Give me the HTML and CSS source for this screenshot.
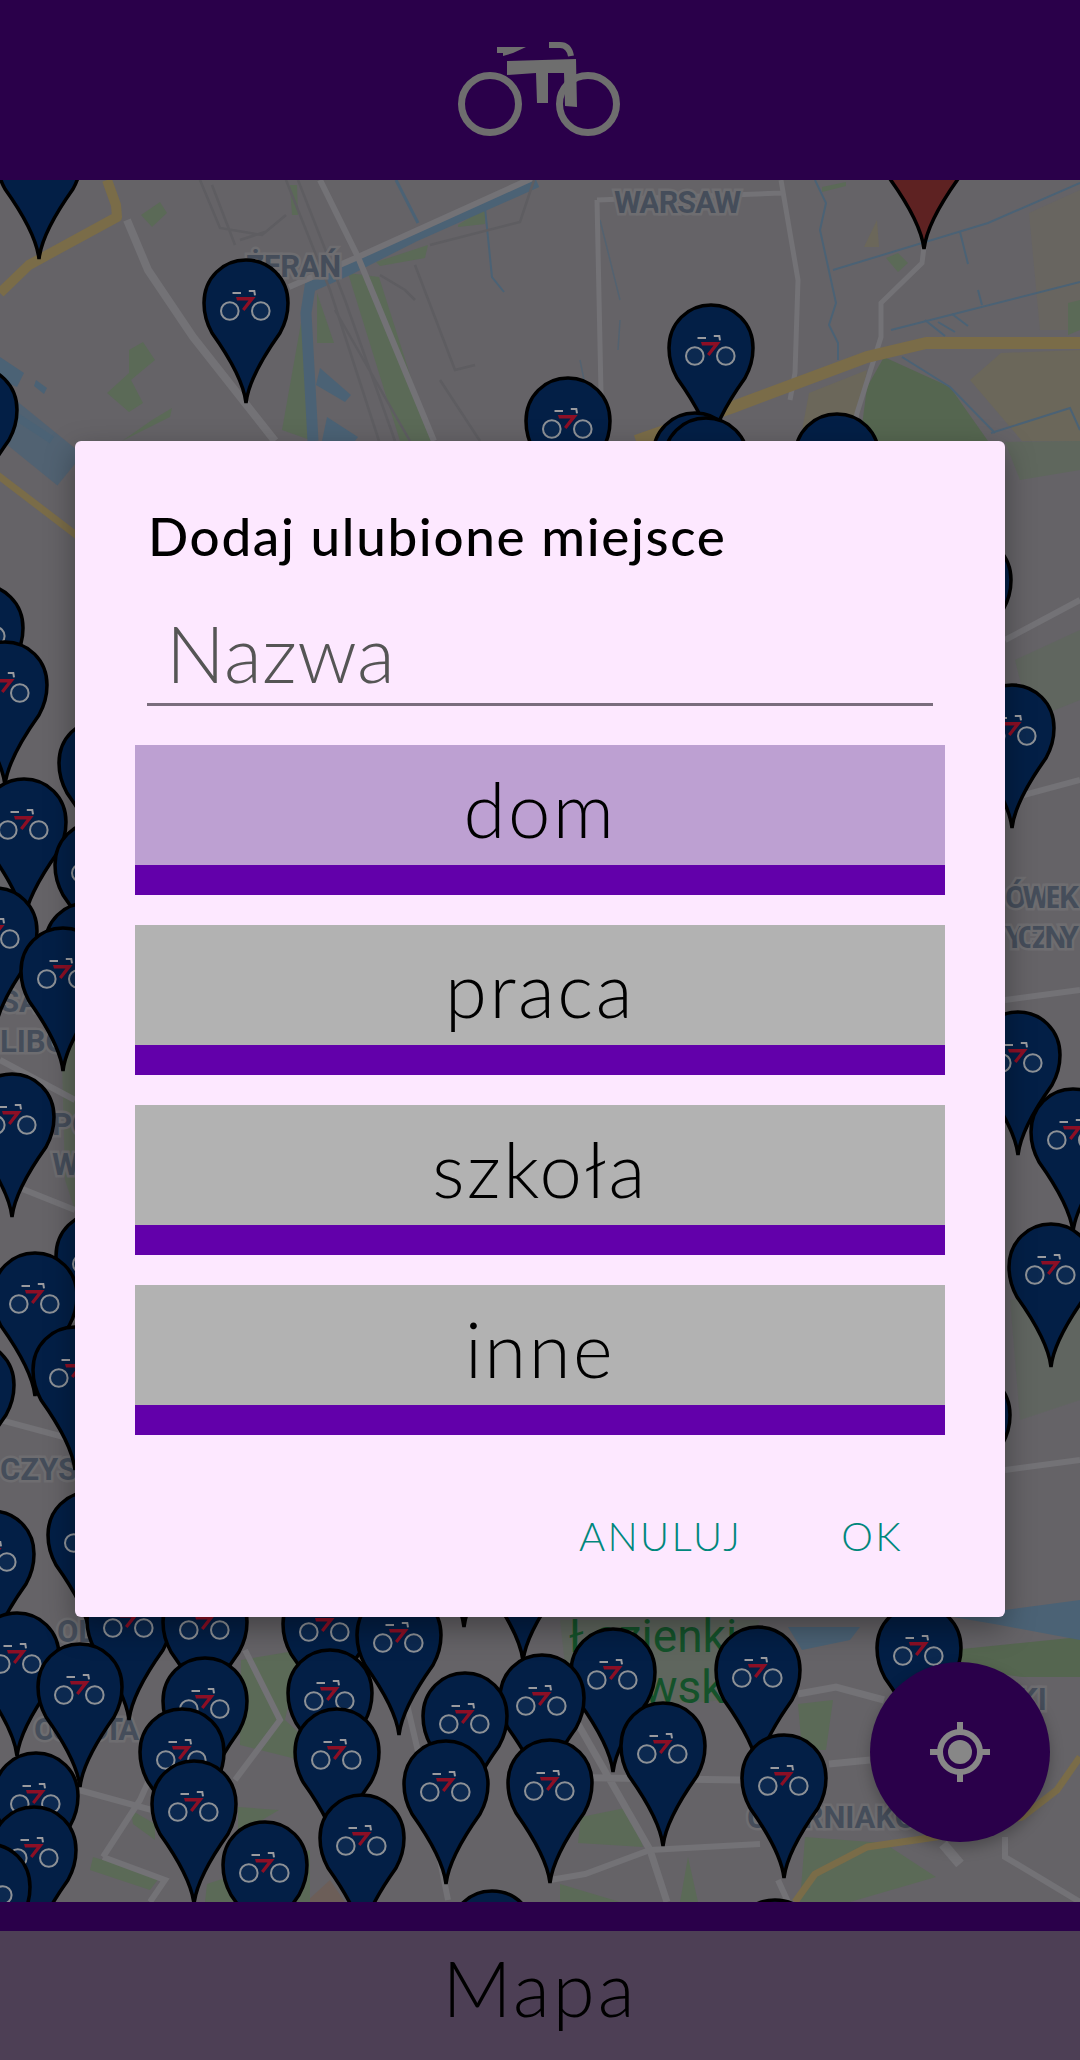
FILE: index.html
```html
<!DOCTYPE html>
<html lang="pl">
<head>
  <meta charset="UTF-8">
  <title>Mapa</title>
  <link rel="stylesheet" href="styles.css">
</head>
<body>
  <div class="app">
    <header class="topbar">
      <svg class="logo" viewBox="420 20 240 130" width="240" height="130">
        <circle cx="490" cy="104" r="28.5" fill="none" stroke="#6e6e6e" stroke-width="7"/>
        <circle cx="588" cy="104" r="28.5" fill="none" stroke="#6e6e6e" stroke-width="7"/>
        <path d="M507 61 L576 59 L577 107 L565 106 L564 73 L548 73 L548 103 L537 103 L536 73 L507 75Z" fill="#6e6e6e"/>
        <path d="M497 47 L526 47 L513 53 L503 56 L503 53 L497 53Z" fill="#6e6e6e"/>
        <path d="M549 45 L560 45 Q569 45 571 56" fill="none" stroke="#6e6e6e" stroke-width="6"/>
      </svg>
    </header>

    <main class="map">
      <svg class="map-canvas" viewBox="0 180 1080 1722" width="1080" height="1722">
        <defs>
          <g id="bike">
            <circle cx="-16.2" cy="-92" r="8.8" fill="#0c2950" stroke="#8d9196" stroke-width="2"/>
            <circle cx="14.8" cy="-92" r="8.8" fill="#0c2950" stroke="#8d9196" stroke-width="2"/>
            <path d="M-13.5 -110 H-5 M2.8 -112 H8.3 L9 -107.7" fill="none" stroke="#9a9a9e" stroke-width="2"/>
            <path d="M-10 -106 L9.6 -106 L-1.5 -92 L-4 -94 L2.5 -102.5 L-9 -102.5Z" fill="#8c0f25"/>
          </g>
          <path id="drop" d="M0 0 C-2 -18 -14 -42 -34 -70 C-39 -79 -42 -90 -42 -100 C-42 -125 -23 -143 0 -143 C23 -143 42 -125 42 -100 C42 -90 39 -79 34 -70 C14 -42 2 -18 0 0Z" stroke="#000" stroke-width="3.5"/>
          <g id="pin">
            <use href="#drop" fill="#031f46"/>
            <use href="#bike"/>
          </g>
        </defs>

        <!-- ground -->
        <rect x="0" y="180" width="1080" height="1722" fill="#656367"/>

        <!-- built-up and parks -->
        <g fill="#6b675a">
          <path d="M970 380 L1001 353 L1080 350 L1080 441 L1022 441Z"/>
          <path d="M809 393 L867 370 L860 413 L815 441 L800 441Z"/>
          <path d="M1029 213 L1080 190 L1080 330 L1040 330Z" opacity=".5"/>
          <path d="M864 247 L877 220 L879 247Z"/>
          <path d="M306 1902 L330 1880 L345 1902Z" fill="#6c5e58"/>
        </g>
        <g fill="#5b6a57">
          <path d="M141 215 L160 202 L167 213 L152 227Z"/>
          <path d="M129 350 L143 342 L155 360 L131 380 L143 403 L129 412 L107 393 L129 373Z"/>
          <path d="M172 408 L170 417 L122 441 L152 420Z"/>
          <path d="M348 273 L379 277 L431 441 L400 441Z"/>
          <path d="M376 262 L428 245 L425 258 L380 266Z"/>
          <path d="M458 225 L485 208 L485 224 L458 227Z"/>
          <path d="M301 323 L282 430 L313 441 L306 323Z"/>
          <path d="M317 293 L334 343 L317 343Z"/>
          <path d="M290 185 L297 185 L298 215 L292 215Z"/>
          <path d="M884 357 L950 387 L988 441 L860 441 L867 387Z" fill="#556650"/>
          <path d="M898 253 L908 263 L898 272 L886 258Z"/>
          <path d="M822 187 L846 182 L846 186 L822 192Z"/>
          <path d="M1068 303 L1080 300 L1080 330 L1068 335Z"/>
          <path d="M1005 442 L1080 441 L1080 470 L1020 480Z" opacity=".6"/>
          <path d="M1015 660 L1080 630 L1080 700 L1030 720Z" opacity=".5"/>
          <path d="M60 980 L75 975 L75 1210 L65 1180Z" opacity=".7"/>
          <path d="M1010 1300 L1080 1290 L1080 1400 L1020 1420Z" opacity=".4"/>
          <path d="M241 1660 L300 1650 L285 1720 L340 1770 L240 1745Z"/>
          <path d="M93 1857 L160 1877 L150 1890 L90 1870Z"/>
          <path d="M131 1810 L155 1824 L155 1840 L133 1824Z"/>
          <path d="M238 1807 L279 1810 L238 1834Z"/>
          <path d="M207 1884 L310 1850 L310 1902 L205 1902Z"/>
          <path d="M560 1620 L760 1620 L730 1700 L570 1710Z" opacity=".55"/>
          <path d="M798 1704 L833 1700 L826 1750 L802 1750Z"/>
          <path d="M805 1837 L884 1843 L936 1877 L850 1902 L800 1902Z"/>
          <path d="M884 1657 L1080 1637 L1080 1677 L1022 1677Z" fill="#556650"/>
          <path d="M581 1817 L630 1807 L643 1847 L578 1843Z"/>
          <path d="M560 1884 L620 1902 L560 1902Z"/>
          <path d="M688 1857 L698 1902 L680 1902Z"/>
        </g>

        <!-- water -->
        <g fill="#4b6275">
          <path d="M320 368 L351 395 L345 402 L316 385Z"/>
          <path d="M327 417 L358 437 L355 441 L322 441Z"/>
          <path d="M0 357 L24 373 L17 387 L0 380Z"/>
          <path d="M36 380 L47 388 L44 394 L34 386Z"/>
          <path d="M788 1627 L860 1627 L850 1640 L802 1650Z"/>
          <path d="M953 1617 L1080 1600 L1080 1640 L1000 1625Z"/>
        </g>
        <g fill="none" stroke="#4b6275">
          <path d="M537 182 L413 237 L348 270 L310 287 L306 313 L313 441" stroke-width="11"/>
          <path d="M-10 405 L70 470" stroke-width="40" opacity=".75"/>
          <path d="M17 417 L52 440" stroke-width="8"/>
          <path d="M396 180 L418 223" stroke-width="3"/>
          <path d="M485 208 L492 277 L504 292" stroke-width="2"/>
          <path d="M815 180 L826 203 L820 230 L836 303 L829 325 L838 343 L838 360" stroke-width="2"/>
          <path d="M833 270 L988 223 L1080 183" stroke-width="2"/>
          <path d="M891 330 L1080 282" stroke-width="2"/>
          <path d="M902 357 L950 387 L995 433" stroke-width="2"/>
          <path d="M991 433 L1070 408 L1080 430" stroke-width="2"/>
          <path d="M960 232 L968 264 M978 290 L982 305 M925 320 L945 336 M938 322 L955 332 M952 314 L968 326" stroke-width="2"/>
          <path d="M600 220 L620 300 M620 320 L618 350 M580 360 L585 385" stroke-width="1.5" opacity=".7"/>
        </g>

        <!-- roads -->
        <g fill="none" stroke="#737276" stroke-width="6">
          <path d="M127 220 L148 270 L193 337 L275 441" stroke-width="8"/>
          <path d="M537 176 L358 257 L289 287" stroke-width="6"/>
          <path d="M320 180 L358 257 L434 441" stroke-width="6"/>
          <path d="M597 200 L602 441 M597 200 L781 193 M781 180 L798 280 L795 373 L790 400" stroke-width="5"/>
          <path d="M924 247 L922 263 L881 303 L881 337 L857 413 L852 441" stroke-width="5"/>
          <path d="M75 1100 L0 1060 M0 1180 L75 1210 M0 1300 L75 1320 M0 1420 L75 1440"/>
          <path d="M1005 640 L1080 600 M1005 800 L1080 780 M1005 1000 L1080 990 M1005 1470 L1080 1460"/>
          <path d="M79 1790 L170 1815 M103 1857 L140 1800 L165 1745 M0 1880 L79 1790 M103 1857 L165 1880 L150 1902"/>
          <path d="M245 1650 L280 1720 L235 1780 M392 1640 L420 1760 L448 1900" stroke-width="6"/>
          <path d="M798 1694 L836 1687 L884 1700 M574 1717 L650 1850 L667 1902 M540 1777 L740 1780 M829 1764 L870 1760" stroke-width="7"/>
          <path d="M550 1880 L585 1874 L650 1850 L760 1844 M1005 1837 L1005 1857 L1080 1902 M778 1880 L788 1902"/>
          <path d="M943 1844 L960 1864" stroke-width="10"/>
        </g>
        <g fill="none" stroke="#5e5d61" stroke-width="2.5">
          <path d="M286 180 L330 290 L379 441 M298 180 L345 300 L395 441 M335 310 L410 441"/>
          <path d="M200 180 L220 228 L262 235 L286 215 M212 185 L235 245 M240 240 L265 232"/>
          <path d="M430 245 L520 222 L534 180 M380 275 L405 290 L415 300 M415 265 L455 370 L475 365 M440 380 L480 441"/>
        </g>

        <!-- highways -->
        <g fill="none" stroke="#7a6c48" stroke-linejoin="round">
          <path d="M0 293 L29 265 L117 217 L116 205 L107 180" stroke-width="10"/>
          <path d="M636 441 L733 407 L867 357 L926 343 L1080 343" stroke-width="12"/>
          <path d="M-5 473 L80 538" stroke-width="7"/>
          <path d="M795 1902 L815 1874 L867 1847 L936 1837 L1022 1817 L1057 1790 L1080 1757" stroke-width="7"/>
        </g>

        <!-- labels -->
        <g class="map-label">
          <text x="614" y="213" textLength="127">WARSAW</text>
          <text x="246" y="277" textLength="95">ŻERAŃ</text>
          <text x="0" y="1012">SA</text>
          <text x="0" y="1052">LIBO</text>
          <text x="52" y="1135">PO</text>
          <text x="52" y="1175">W</text>
          <text x="0" y="1480">CZYS</text>
          <text x="57" y="1642">OL</text>
          <text x="34" y="1740" textLength="105">OCHOTA</text>
          <text x="1005" y="908" textLength="74">ÓWEK</text>
          <text x="1005" y="948" textLength="74">YCZNY</text>
          <text x="1018" y="1710">KI</text>
          <text x="747" y="1828">CZERNIAKÓW</text>
          <text class="park" x="569" y="1652">Łazienki</text>
          <text class="park" x="643" y="1703">wski</text>
        </g>

        <!-- stations, lower ones paint over upper ones -->
        <g>
          <use href="#drop" x="924" y="249" fill="#5e2222"/>
          <use href="#pin" x="39" y="259"/>
          <use href="#pin" x="246" y="403"/>
          <use href="#pin" x="711" y="448"/>
          <use href="#pin" x="-25" y="510"/>
          <use href="#pin" x="568" y="521"/>
          <use href="#pin" x="695" y="556"/>
          <use href="#pin" x="837" y="557"/>
          <use href="#pin" x="706" y="561"/>
          <use href="#pin" x="-19" y="728"/>
          <use href="#pin" x="969" y="680"/>
          <use href="#pin" x="5" y="785"/>
          <use href="#pin" x="1012" y="828"/>
          <use href="#pin" x="101" y="863"/>
          <use href="#pin" x="24" y="922"/>
          <use href="#pin" x="97" y="965"/>
          <use href="#pin" x="-5" y="1031"/>
          <use href="#pin" x="87" y="1046"/>
          <use href="#pin" x="63" y="1071"/>
          <use href="#pin" x="1018" y="1155"/>
          <use href="#pin" x="12" y="1217"/>
          <use href="#pin" x="1073" y="1232"/>
          <use href="#pin" x="98" y="1356"/>
          <use href="#pin" x="1051" y="1367"/>
          <use href="#pin" x="35" y="1396"/>
          <use href="#pin" x="75" y="1470"/>
          <use href="#pin" x="-28" y="1485"/>
          <use href="#pin" x="968" y="1515"/>
          <use href="#pin" x="464" y="1627"/>
          <use href="#pin" x="90" y="1635"/>
          <use href="#pin" x="-8" y="1654"/>
          <use href="#pin" x="523" y="1661"/>
          <use href="#pin" x="129" y="1720"/>
          <use href="#pin" x="205" y="1722"/>
          <use href="#pin" x="325" y="1724"/>
          <use href="#pin" x="399" y="1735"/>
          <use href="#pin" x="919" y="1748"/>
          <use href="#pin" x="17" y="1756"/>
          <use href="#pin" x="758" y="1770"/>
          <use href="#pin" x="613" y="1772"/>
          <use href="#pin" x="80" y="1787"/>
          <use href="#pin" x="330" y="1793"/>
          <use href="#pin" x="542" y="1798"/>
          <use href="#pin" x="205" y="1801"/>
          <use href="#pin" x="465" y="1816"/>
          <use href="#pin" x="663" y="1846"/>
          <use href="#pin" x="182" y="1852"/>
          <use href="#pin" x="337" y="1852"/>
          <use href="#pin" x="784" y="1878"/>
          <use href="#pin" x="550" y="1883"/>
          <use href="#pin" x="446" y="1884"/>
          <use href="#pin" x="36" y="1896"/>
          <use href="#pin" x="194" y="1904"/>
          <use href="#pin" x="362" y="1938"/>
          <use href="#pin" x="34" y="1950"/>
          <use href="#pin" x="265" y="1965"/>
          <use href="#pin" x="-12" y="1987"/>
          <use href="#pin" x="492" y="2034"/>
          <use href="#pin" x="775" y="2043"/>
        </g>
      </svg>

      <button class="locate">
        <svg viewBox="0 0 60 60" width="60" height="60">
          <circle cx="30" cy="30" r="20" fill="none" stroke="#878787" stroke-width="6"/>
          <circle cx="30" cy="30" r="12" fill="#878787"/>
          <path d="M30 0 V10 M30 50 V60 M0 30 H10 M50 30 H60" stroke="#878787" stroke-width="6"/>
        </svg>
      </button>
    </main>

    <footer class="tab">Mapa</footer>
  </div>

  <div class="overlay">
    <div class="dialog">
      <h2 class="dialog-title">Dodaj ulubione miejsce</h2>
      <div class="name-field">Nazwa</div>
      <div class="options">
        <button class="option selected">dom</button>
        <button class="option">praca</button>
        <button class="option">szkoła</button>
        <button class="option">inne</button>
      </div>
      <div class="actions">
        <button class="action">ANULUJ</button>
        <button class="action">OK</button>
      </div>
    </div>
  </div>
</body>
</html>
```

FILE: styles.css
```css
* {
  box-sizing: border-box;
}
body {
  margin: 0;
  width: 1080px;
  height: 2060px;
  overflow: hidden;
  position: relative;
  font-family: 'Lato', sans-serif;
}
button {
  font-family: inherit;
  border: none;
  padding: 0;
}
.app {
  display: flex;
  flex-direction: column;
  height: 2060px;
}
.topbar {
  height: 180px;
  padding-top: 20px;
  display: flex;
  justify-content: center;
  align-items: flex-start;
  background: #2a004a;
}
.map {
  flex: 1;
  position: relative;
  overflow: hidden;
}
.map-canvas {
  display: block;
}
.map-label text {
  font-family: 'Roboto', sans-serif;
  font-size: 31px;
  font-weight: 700;
  fill: #454d5a;
  stroke: #6e6d70;
  stroke-width: 5px;
  paint-order: stroke;
}
.map-label .park {
  font-size: 46px;
  font-weight: 400;
  fill: #14522a;
  stroke: none;
}
.locate {
  position: absolute;
  right: 30px;
  bottom: 60px;
  width: 180px;
  height: 180px;
  border-radius: 50%;
  background: #2a004a;
  display: flex;
  align-items: center;
  justify-content: center;
  box-shadow: 0 6px 14px rgba(0, 0, 0, 0.25);
}
.tab {
  height: 158px;
  border-top: 29px solid #2a004a;
  background: #4d3f55;
  color: #000;
  font-size: 76px;
  font-weight: 300;
  letter-spacing: 3px;
  line-height: 114px;
  text-align: center;
}
.overlay {
  position: absolute;
  inset: 0 0 2px;
  display: flex;
  align-items: center;
  justify-content: center;
}
.dialog {
  width: 930px;
  padding-top: 67px;
  background: #fde8ff;
  border-radius: 6px;
  box-shadow: 0 11px 30px rgba(0, 0, 0, 0.35);
}
.dialog-title {
  margin: 0 0 27px 73px;
  font-size: 53px;
  font-weight: 500;
  letter-spacing: 1.65px;
  line-height: 55px;
  color: #000;
}
.name-field {
  height: 116px;
  margin: 0 72px;
  padding-left: 19px;
  border-bottom: 3px solid #7a6d7d;
  font-size: 78px;
  font-weight: 300;
  letter-spacing: 0.5px;
  line-height: 126px;
  color: #555;
}
.options {
  display: grid;
  gap: 30px;
  margin-top: 39px;
  padding: 0 60px;
}
.option {
  height: 150px;
  padding-top: 6px;
  border-bottom: 30px solid #6200aa;
  background: #b2b2b2;
  color: #000;
  font-size: 76px;
  font-weight: 300;
  letter-spacing: 2.5px;
}
.option.selected {
  background: #bda0d2;
}
.actions {
  display: flex;
  justify-content: flex-end;
  gap: 99px;
  padding: 71px 102px 51px 0;
}
.action {
  background: none;
  color: #00877c;
  font-size: 40px;
  font-weight: 300;
  line-height: 60px;
  letter-spacing: 2.4px;
}
```
